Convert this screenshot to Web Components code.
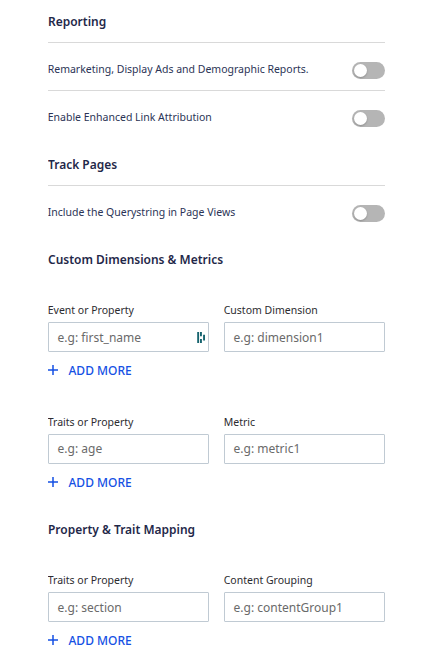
<!DOCTYPE html>
<html lang="en">
<head>
<meta charset="utf-8">
<title>Settings</title>
<style>
body{margin:0;background:#fff;font-family:"Noto Sans",sans-serif;color:#1f2849}
</style>
</head>
<body>
<settings-page></settings-page>
<script>
function define(name, html, setup) {
  const template = document.createElement('template');
  template.innerHTML = html;
  customElements.define(name, class extends HTMLElement {
    constructor() {
      super();
      this.attachShadow({mode: 'open'}).appendChild(template.content.cloneNode(true));
    }
    connectedCallback() { if (setup) setup(this, this.shadowRoot); }
  });
}

define('section-title', `
<style>
:host{display:flex;align-items:center;box-sizing:border-box;height:43px;padding-top:2px;border-bottom:1px solid #d9d9d9;font-size:11.97px;font-weight:600;line-height:16px;color:#1f2849}
:host([plain]){border-bottom-color:transparent}
</style><slot></slot>`);

define('toggle-switch', `
<style>
:host{display:flex;align-items:center;box-sizing:border-box;width:33px;height:17px;padding:0 2px;border-radius:9px;background:#b5b5b5}
span{width:13px;height:13px;border-radius:50%;background:#fff;box-shadow:0 1px 2px rgba(0,0,0,.22)}
</style><span></span>`);

define('toggle-row', `
<style>
:host{display:flex;align-items:center;justify-content:space-between;box-sizing:border-box;height:48px;padding-top:7px;border-bottom:1px solid #d9d9d9;font-size:10.5px;line-height:15px;color:#2b3456}
:host([last]){border-bottom-color:transparent}
.text{margin:-2px 0 0 -.3px}
</style><span class="text"><slot></slot></span><toggle-switch></toggle-switch>`);

define('key-icon', `
<style>:host{display:block;width:9px;height:13px}svg{display:block}</style>
<svg width="9" height="13" fill="#17646f"><path d="M.2 1h1.9v11H.2zM3 1h1.9v4.2H3zM3 8h1.9v4H3zM6.1 3.8H8v5.6H6.1z"/></svg>`);

define('text-field', `
<style>
:host{display:block}
.label{display:block;margin-left:-.3px;font-size:10.5px;line-height:16px;height:20px;color:#2c2c30}
.box{display:flex;align-items:center;justify-content:space-between;box-sizing:border-box;height:30px;padding:0 2px 0 8.6px;border:1px solid #c0cad3;border-radius:1px;font-size:12px;line-height:normal;color:#6a6a6a}
:host([raised]) .box{padding-bottom:2px}
</style><span class="label"></span><div class="box"><span class="hint"></span><slot></slot></div>`,
(el, root) => {
  root.querySelector('.label').textContent = el.getAttribute('label');
  root.querySelector('.hint').textContent = el.getAttribute('hint');
});

define('add-more', `
<style>
:host{display:flex;align-items:center;gap:10.5px;height:36px;font-size:12px;font-weight:500;color:#1550e4}
svg{display:block}
</style><svg width="10" height="10" fill="none" stroke="currentColor" stroke-width="1.5"><path d="M0 5h10M5 0v10"/></svg><span>ADD MORE</span>`);

define('mapping-group', `
<style>
:host{display:block}
.fields{display:grid;grid-template-columns:161px 161px;gap:15px}
</style><div class="fields"><slot></slot></div><add-more></add-more>`);

define('settings-page', `
<style>
:host{display:block;width:337px;height:660px;margin-left:48px;overflow:hidden}
.track{margin-top:4px}
.custom{margin-top:4px}
.first{margin-top:21px}
.second{margin-top:26px}
.map{margin-top:8px}
</style>
<section-title>Reporting</section-title>
<toggle-row>Remarketing, Display Ads and Demographic Reports.</toggle-row>
<toggle-row last>Enable Enhanced Link Attribution</toggle-row>
<section-title class="track">Track Pages</section-title>
<toggle-row last>Include the Querystring in Page Views</toggle-row>
<section-title plain class="custom">Custom Dimensions &amp; Metrics</section-title>
<mapping-group class="first">
<text-field label="Event or Property" hint="e.g: first_name"><key-icon></key-icon></text-field>
<text-field label="Custom Dimension" hint="e.g: dimension1"></text-field>
</mapping-group>
<mapping-group class="second">
<text-field raised label="Traits or Property" hint="e.g: age"></text-field>
<text-field raised label="Metric" hint="e.g: metric1"></text-field>
</mapping-group>
<section-title plain class="map">Property &amp; Trait Mapping</section-title>
<mapping-group class="first">
<text-field label="Traits or Property" hint="e.g: section"></text-field>
<text-field label="Content Grouping" hint="e.g: contentGroup1"></text-field>
</mapping-group>`);
</script>
</body>
</html>
